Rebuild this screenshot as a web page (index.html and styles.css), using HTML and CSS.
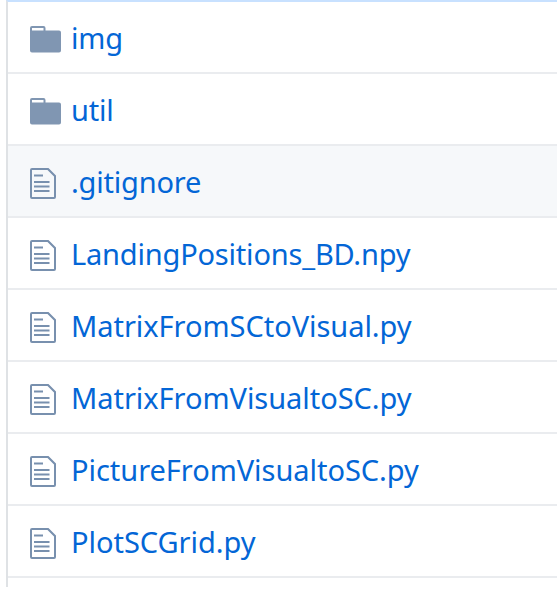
FILE: index.html
```
<!DOCTYPE html>
<html lang="en"><head><meta charset="utf-8"><title>Files</title><link rel="stylesheet" href="styles.css"></head>
<body>
<svg class="defs" width="0" height="0" aria-hidden="true">
<symbol id="folder" viewBox="0 0 31 27"><path fill-rule="evenodd" d="M2 0H13.500Q15.500 0 15.500 2V4.500H29Q31 4.500 31 6.500V24.500Q31 26.500 29 26.500H2Q0 26.500 0 24.500V2Q0 0 2 0ZM2 2V4.500H13.500V2Z"/></symbol>
<symbol id="file" viewBox="0 0 26 31"><path fill-rule="evenodd" d="M2 0H18.500L26 7.500V29Q26 31 24 31H2Q0 31 0 29V2Q0 0 2 0ZM2 2V29H24V8.500L17.500 2Z"/><path d="M4 6.500H13V8.500H4ZM4 13H19.500V15H4ZM4 17.500H19.500V19.500H4ZM4 22H19.500V24H4Z"/></symbol>
</svg>
<main class="files">
<div class="row"><svg class="folder"><use href="#folder"/></svg><a class="name">img</a></div>
<div class="row"><svg class="folder"><use href="#folder"/></svg><a class="name">util</a></div>
<div class="row active"><svg class="file"><use href="#file"/></svg><a class="name">.gitignore</a></div>
<div class="row"><svg class="file"><use href="#file"/></svg><a class="name">LandingPositions_BD.npy</a></div>
<div class="row"><svg class="file"><use href="#file"/></svg><a class="name script">MatrixFromSCtoVisual.py</a></div>
<div class="row"><svg class="file"><use href="#file"/></svg><a class="name script">MatrixFromVisualtoSC.py</a></div>
<div class="row"><svg class="file"><use href="#file"/></svg><a class="name script">PictureFromVisualtoSC.py</a></div>
<div class="row"><svg class="file"><use href="#file"/></svg><a class="name script">PlotSCGrid.py</a></div>
<div class="tail"></div>
</main>
</body></html>
```
FILE: styles.css
```
* { box-sizing: border-box; }
body { margin: 0; background: #fff; overflow: hidden; font-family: "Segoe UI", "Noto Sans", sans-serif; }
.defs { display: block; }
.files { margin-left: 6px; border-left: 2px solid #dfe2e5; border-top: 2px solid #c8e1ff; }
.row { height: 72px; display: flex; align-items: flex-start; padding-left: 22px; border-bottom: 2px solid #eaecef; }
.active { background: #f6f8fa; }
.row svg { flex: none; fill: #8096b2; }
.folder { width: 31px; height: 27px; margin-right: 10px; margin-top: 24px; }
.row .file { width: 26px; height: 31px; margin-right: 15px; margin-top: 22px; fill: #7890ae; }
.name { color: #0366d6; font-size: 29px; line-height: 40px; margin-top: 16px; white-space: nowrap; letter-spacing: -.19px; }
.script { letter-spacing: -.04px; }
.tail { height: 9px; }
```
